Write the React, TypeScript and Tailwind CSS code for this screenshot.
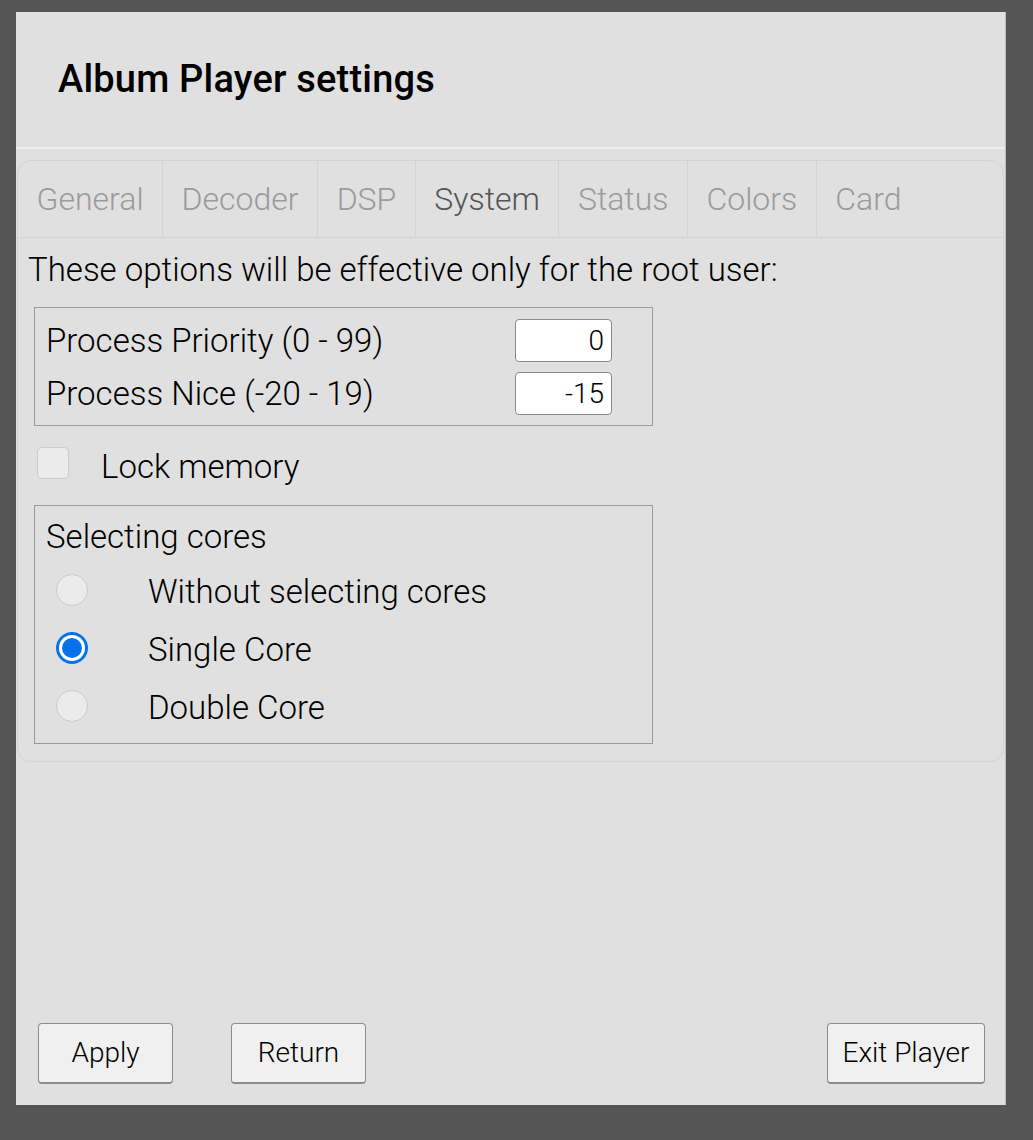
import React, { useState } from 'react';

const tabs = ['General', 'Decoder', 'DSP', 'System', 'Status', 'Colors', 'Card'];

const cores = ['Without selecting cores', 'Single Core', 'Double Core'];

const App: React.FC = () => {
  const [activeTab, setActiveTab] = useState('System');
  const [priority, setPriority] = useState('0');
  const [nice, setNice] = useState('-15');
  const [lockMemory, setLockMemory] = useState(false);
  const [core, setCore] = useState('Single Core');

  return (
    <div className="min-h-screen bg-[#555555] pt-[12px] pl-[16px] font-['Roboto',sans-serif] font-light text-black">
      <div className="w-[990px] h-[1093px] bg-[#e0e0e0] border-r border-[#bdbdbd] flex flex-col">
        {/* Header */}
        <div className="h-[135px] flex items-center pl-[42px]">
          <h1 className="text-[38px] font-medium tracking-[0.2px]">Album Player settings</h1>
        </div>
        <div className="h-[2px] bg-[#efefef]" />

        {/* Tabs */}
        <div className="mt-[11px] ml-[1px] mr-[1px] h-[602px] rounded-[14px] border border-[#d3d3d3] flex flex-col">
          <div className="h-[77px] flex border-b border-[#d3d3d3] shrink-0">
            {tabs.map((tab, i) => (
              <button
                key={tab}
                type="button"
                onClick={() => setActiveTab(tab)}
                className={`px-[18.5px] flex items-center text-[32px] ${
                  i < tabs.length - 1 ? 'border-r border-[#d3d3d3]' : ''
                } ${activeTab === tab ? 'text-[#555555]' : 'text-[#9b9b9b]'}`}
              >
                {tab}
              </button>
            ))}
          </div>

          <div className="pl-[10px]">
            <p className="mt-[14px] text-[33px] leading-[36px]">
              These options will be effective only for the root user:
            </p>

            {/* Process priority group */}
            <div className="mt-[19px] ml-[6px] w-[619px] border border-[#9a9a9a] pt-[11px] pb-[10px] pl-[11px] pr-[40px] flex flex-col gap-[10px]">
              <div className="h-[43px] flex items-center justify-between">
                <span className="text-[33px] leading-[40px]">Process Priority (0 - 99)</span>
                <input
                  value={priority}
                  onChange={(e) => setPriority(e.target.value)}
                  className="w-[97px] h-[43px] bg-white border border-[#8a8a8a] rounded-[4px] text-right pr-[7px] text-[28px] font-light outline-none"
                />
              </div>
              <div className="h-[43px] flex items-center justify-between">
                <span className="text-[33px] leading-[40px]">Process Nice (-20 - 19)</span>
                <input
                  value={nice}
                  onChange={(e) => setNice(e.target.value)}
                  className="w-[97px] h-[43px] bg-white border border-[#8a8a8a] rounded-[4px] text-right pr-[7px] text-[28px] font-light outline-none"
                />
              </div>
            </div>

            {/* Lock memory */}
            <label className="mt-[21px] ml-[9px] flex items-center h-[32px] cursor-pointer">
              <span
                onClick={() => setLockMemory(!lockMemory)}
                className="w-[32px] h-[32px] rounded-[5px] border border-[#cbcbcb] bg-[#ebebeb] flex items-center justify-center text-[#0a72e8] text-[24px]"
              >
                {lockMemory ? '✓' : ''}
              </span>
              <span className="ml-[32px] mt-[8px] text-[33px] leading-[40px]">Lock memory</span>
            </label>

            {/* Cores group */}
            <div className="mt-[26px] ml-[6px] w-[619px] h-[239px] border border-[#9a9a9a] pt-[11px] pl-[11px]">
              <div className="text-[33px] leading-[40px]">Selecting cores</div>
              <div className="mt-[4px] flex flex-col">
                {cores.map((c) => (
                  <div
                    key={c}
                    onClick={() => setCore(c)}
                    className="h-[58px] flex items-center cursor-pointer"
                  >
                    <span className="ml-[10px] w-[32px] h-[32px] shrink-0">
                      {core === c ? (
                        <span className="block w-[32px] h-[32px] rounded-full bg-[#0a72e8] p-[3px]">
                          <span className="block w-full h-full rounded-full bg-white p-[3px]">
                            <span className="block w-full h-full rounded-full bg-[#0a72e8]" />
                          </span>
                        </span>
                      ) : (
                        <span className="block w-[32px] h-[32px] rounded-full border border-[#cbcbcb] bg-[#ebebeb]" />
                      )}
                    </span>
                    <span className="ml-[60px] mt-[4px] text-[33px] leading-[40px]">{c}</span>
                  </div>
                ))}
              </div>
            </div>
          </div>
        </div>

        <div className="flex-1" />

        {/* Buttons */}
        <div className="flex items-center pl-[22px] pr-[20px] pb-[21px]">
          <button
            type="button"
            className="w-[135px] h-[61px] bg-[#f0f0f0] border border-[#8c8c8c] border-b-2 rounded-[4px] text-[28px] font-light"
          >
            Apply
          </button>
          <button
            type="button"
            className="ml-[58px] w-[135px] h-[61px] bg-[#f0f0f0] border border-[#8c8c8c] border-b-2 rounded-[4px] text-[28px] font-light"
          >
            Return
          </button>
          <div className="flex-1" />
          <button
            type="button"
            className="w-[158px] h-[61px] bg-[#f0f0f0] border border-[#8c8c8c] border-b-2 rounded-[4px] text-[28px] font-light"
          >
            Exit Player
          </button>
        </div>
      </div>
    </div>
  );
};

export default App;
